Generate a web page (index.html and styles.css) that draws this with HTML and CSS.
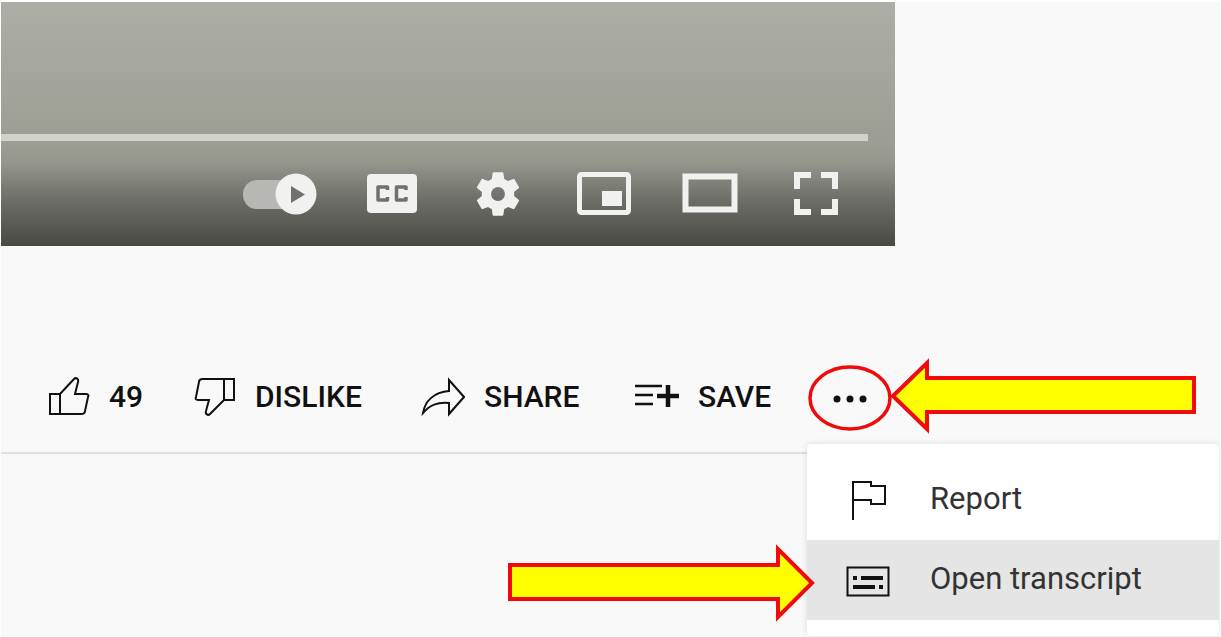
FILE: index.html
```html
<!DOCTYPE html>
<html lang="en">
<head>
<meta charset="utf-8">
<title>Video page</title>
<link rel="stylesheet" href="styles.css">
</head>
<body>
<main class="page">
  <section class="player" aria-label="Video player">
    <div class="progress"></div>
    <div class="controls">
      <button class="control control-wide" aria-label="Autoplay">
        <svg width="76" height="48" viewBox="0 0 76 48"><rect x="2" y="10" width="60" height="29" rx="14" fill="#b7b7b4"/><circle cx="55" cy="24" r="20.500" fill="#f1f1f0"/><path d="M50 16v17l14-8.500z" fill="#70716b"/></svg>
      </button>
      <button class="control" aria-label="Subtitles">
        <svg width="50" height="48" viewBox="0 0 50 48"><rect y="4" width="50" height="39" rx="4" fill="#f1f1f0"/><path d="M20.500 20v-3H11v13h9.500v-3M39 20v-3h-9.500v13H39v-3" fill="none" stroke="#70716b" stroke-width="3.500" stroke-linejoin="round"/></svg>
      </button>
      <button class="control" aria-label="Settings">
        <svg width="52" height="52" viewBox="0 0 24 24"><path fill="#f1f1f0" fill-rule="evenodd" d="M19.430 12.980a7.800 7.800 0 0 0 0-1.960l2.110-1.650a.5.5 0 0 0 .12-.64l-2-3.460a.5.5 0 0 0-.61-.22l-2.490 1a7.300 7.300 0 0 0-1.690-.98l-.38-2.650A.49.490 0 0 0 14 2h-4a.49.490 0 0 0-.49.420l-.38 2.650c-.61.250-1.170.590-1.690.980l-2.490-1a.5.5 0 0 0-.61.220l-2 3.460a.5.5 0 0 0 .12.640l2.110 1.650a7.800 7.800 0 0 0 0 1.960l-2.110 1.650a.5.5 0 0 0-.12.640l2 3.460c.12.220.390.300.610.220l2.490-1c.52.400 1.080.730 1.690.980l.38 2.650c.03.240.240.420.490.420h4c.25 0 .46-.18.490-.42l.38-2.650a7.300 7.300 0 0 0 1.690-.98l2.490 1c.23.090.490 0 .61-.22l2-3.460a.5.5 0 0 0-.12-.64zM12 15.200a3.200 3.200 0 1 1 0-6.400 3.200 3.200 0 0 1 0 6.400z"/></svg>
      </button>
      <button class="control" aria-label="Miniplayer">
        <svg width="54" height="48" viewBox="0 0 54 48"><rect x="2.500" y="4.500" width="49" height="38" rx="2" fill="none" stroke="#f1f1f0" stroke-width="5"/><path d="M25 21h20v15H25z" fill="#f1f1f0"/></svg>
      </button>
      <button class="control" aria-label="Theater mode">
        <svg width="56" height="48" viewBox="0 0 56 48"><path d="M3.500 6.500h49v33h-49z" fill="none" stroke="#f1f1f0" stroke-width="6"/></svg>
      </button>
      <button class="control" aria-label="Full screen">
        <svg width="46" height="48" viewBox="0 0 46 48"><path d="M4 19V5h14M28 5h14v14M42 29v13H28M18 42H4V29" fill="none" stroke="#f1f1f0" stroke-width="6"/></svg>
      </button>
    </div>
  </section>

  <div class="actions">
    <button class="action">
      <svg width="42" height="40" viewBox="0 0 42 40"><path d="M2 17h10v20H2zM12 17 26 2c2-2 5 0 4 3l-3 12h11c2 0 3 1 2 3l-3 14c0 2-2 3-4 3H12"/></svg>
      <span>49</span>
    </button>
    <button class="action">
      <svg width="42" height="40" viewBox="0 0 42 40"><path d="M40 23H30V2h10zM30 23 16 37c-2 2-5 0-4-3l3-11H4c-2 0-3-1-2-3L5 5c0-2 2-3 4-3h21"/></svg>
      <span>DISLIKE</span>
    </button>
    <button class="action">
      <svg width="44" height="40" viewBox="0 0 44 40"><path d="M28 3v11C13 15 4 24 2 36c7-8 14-11 26-10v11l15-17z"/></svg>
      <span>SHARE</span>
    </button>
    <button class="action">
      <svg width="44" height="40" viewBox="0 0 44 40"><path d="M0 9h27M0 18h18M0 27h18" stroke-width="2.500"/><path d="M33 8v22M22 19h22" stroke-width="4.500"/></svg>
      <span>SAVE</span>
    </button>
    <div class="more">
      <button class="action more-button" aria-label="More actions" aria-expanded="true">
        <svg width="84" height="68" viewBox="0 0 84 68"><g fill="#111" stroke="none"><circle cx="29" cy="36" r="3.500"/><circle cx="42" cy="36" r="3.500"/><circle cx="55" cy="36" r="3.500"/></g><ellipse cx="42" cy="35" rx="40" ry="31" stroke="#f00a0a" stroke-width="3.500"/></svg>
      </button>
      <div class="menu">
        <button class="menu-item">
          <svg width="44" height="44" viewBox="0 0 44 44"><path d="M7 42V4h18v4h14v18H25v-4H7"/></svg>
          <span>Report</span>
        </button>
        <button class="menu-item menu-item-active">
          <svg width="44" height="44" viewBox="0 0 44 44"><path d="M1.500 9.500h41v28h-41z"/><path d="M7 20h4M15 20h22M7 29h22M33 29h4" stroke-width="4"/></svg>
          <span>Open transcript</span>
        </button>
      </div>
    </div>
  </div>

  <svg class="arrow arrow-more" width="308" height="78" viewBox="0 0 308 78"><path d="M3 39 37 6v15h267v34H37v17z"/></svg>
  <svg class="arrow arrow-transcript" width="308" height="78" viewBox="0 0 308 78"><path d="M304 39 270 5v16H2v34h268v18z"/></svg>
</main>
</body>
</html>
```
FILE: styles.css
```css
* {
  box-sizing: border-box;
}

body {
  margin: 0;
  background: #fff;
  color: #111;
  font-family: Roboto, "Liberation Sans", sans-serif;
}

button {
  padding: 0;
  border: 0;
  background: none;
  color: inherit;
  font: inherit;
}

svg {
  display: block;
  flex: none;
}

.page {
  position: relative;
  min-height: calc(100vh - 2px);
  margin: 2px 1px 0;
  background: #f9f9f9;
  overflow: hidden;
}

.player {
  max-width: 894px;
  padding-top: 132px;
  background: linear-gradient(#adafa6 0, #9b9c92 60%, #94958b 66%, #6b6c66 82%, #484943 100%);
}

.progress {
  height: 7px;
  margin-right: 27px;
  background: #d0d2cb;
}

.controls {
  display: flex;
  align-items: center;
  justify-content: flex-end;
  gap: 44px;
  height: 105px;
  padding-right: 48px;
}

.control {
  display: flex;
  align-items: center;
  justify-content: center;
  width: 62px;
}

.control-wide {
  width: 76px;
}

.actions {
  display: grid;
  grid-template-columns: 146px 227px 214px 173px auto;
  align-items: center;
  max-width: 894px;
  margin-top: 117px;
  padding: 0 0 21px 47px;
  border-bottom: 2px solid #e0e0e0;
}

.action {
  display: flex;
  align-items: center;
  gap: 19px;
  font-size: 30px;
  font-weight: 500;
  line-height: 32px;
  white-space: nowrap;
}

.action svg,
.menu-item svg {
  fill: none;
  stroke: #111;
  stroke-width: 2;
}

.more {
  position: relative;
}

.menu {
  position: absolute;
  top: 81px;
  left: -1px;
  width: 412px;
  padding: 16px 0;
  border-radius: 4px;
  background: #fff;
  box-shadow: 0 0 6px rgba(0, 0, 0, 0.12);
}

.menu-item {
  display: flex;
  align-items: center;
  gap: 40px;
  width: 100%;
  height: 80px;
  padding-left: 39px;
  font-size: 31px;
  line-height: 36px;
  text-align: left;
}

.menu-item-active {
  background: #e5e5e5;
}

.menu-item span {
  padding-bottom: 2px;
  color: #333;
}

.arrow {
  position: absolute;
  fill: #ff0;
  stroke: #f00a0a;
  stroke-width: 4;
}

.arrow-more {
  top: 355px;
  left: 889px;
}

.arrow-transcript {
  top: 542px;
  left: 507px;
}
```
